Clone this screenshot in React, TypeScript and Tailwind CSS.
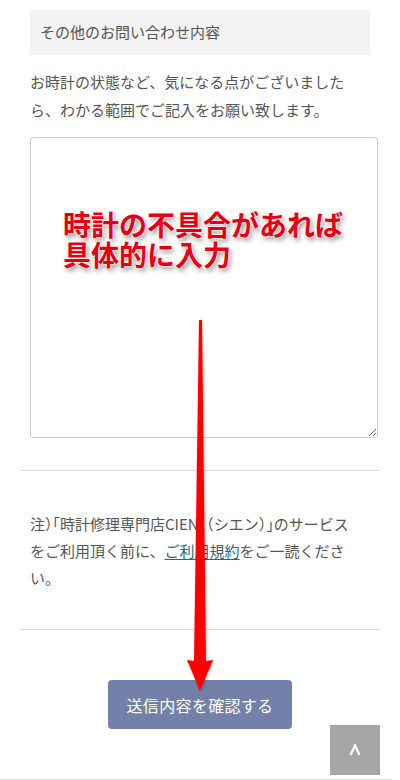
import React from "react";

const jp = "font-['Noto_Sans_CJK_JP','Noto_Sans',sans-serif]";

const Arrow = () => (
  <svg
    className="absolute left-0 top-0 pointer-events-none"
    width="400"
    height="780"
    viewBox="0 0 400 780"
  >
    <defs>
      <filter id="arrowShadow" x="-50%" y="-10%" width="200%" height="120%">
        <feDropShadow dx="1" dy="1" stdDeviation="1.5" floodColor="#000" floodOpacity="0.25" />
      </filter>
    </defs>
    <polygon
      points="199,320 202,320 206,661 213,660 200,691 187,660 194,661"
      fill="#ff0000"
      filter="url(#arrowShadow)"
    />
  </svg>
);

export default function App() {
  return (
    <div className={`relative w-[400px] h-[780px] overflow-hidden bg-white text-[#555] ${jp}`}>
      <div className="mx-5 pt-[10px]">
        <div className="px-[10px]">
          {/* label */}
          <div className="h-[45px] bg-[#f3f3f3] flex items-center pl-[10px] text-[15px] text-[#555]">
            その他のお問い合わせ内容
          </div>

          <p className="mt-[13px] text-[15px] leading-[28px] whitespace-nowrap">
            お時計の状態など、気になる点がございました
            <br />
            ら、わかる範囲でご記入をお願い致します。
          </p>

          <div className="relative mt-[13px] w-[348px] h-[301px]">
            <textarea
              className="block w-[348px] h-[301px] border border-[#ccc] rounded-[3px] bg-white outline-none"
              defaultValue=""
            />
            <div className="absolute left-[33px] top-[72px] text-[28px] leading-[30px] font-bold text-[#e60012] whitespace-nowrap [text-shadow:0_0_2px_#fff,0_0_2px_#fff,0_0_2px_#fff,2px_3px_5px_rgba(0,0,0,0.45)]">
              時計の不具合があれば
              <br />
              具体的に入力
            </div>
          </div>
        </div>

        <div className="mt-[32px] h-px bg-[#ddd]" />

        <p className="mt-[39px] px-[10px] text-[15px] leading-[27px] whitespace-nowrap">
          注<span className="[font-feature-settings:'halt']">）「</span>時計修理専門店CIEN（シエン）
          <span className="[font-feature-settings:'halt']">」</span>のサービス
          <br />
          をご利用頂く前に、
          <a href="#" className="text-[#1f6c7a] underline underline-offset-2">
            ご利用規約
          </a>
          をご一読くださ
          <br />
          い。
        </p>

        <div className="mt-[38px] h-px bg-[#ddd]" />

        <div className="mt-[50px] flex justify-center">
          <button className="w-[184px] h-[49px] rounded-[4px] bg-[#7380a9] text-white text-[16px] tracking-[0.02em]">
            送信内容を確認する
          </button>
        </div>
      </div>

      <div className="mt-[50px] w-[392px] h-px bg-[#ddd]" />

      {/* back to top */}
      <div className="absolute left-[330px] top-[725px] w-[50px] h-[50px] bg-[#a6a6a6] flex items-center justify-center">
        <svg width="12" height="12" viewBox="0 0 12 12">
          <polyline points="1.5,11 6,1.5 10.5,11" fill="none" stroke="#fff" strokeWidth="2.2" />
        </svg>
      </div>

      <Arrow />
    </div>
  );
}
